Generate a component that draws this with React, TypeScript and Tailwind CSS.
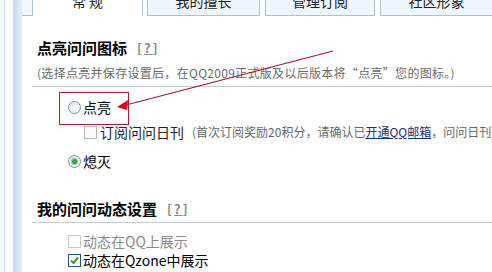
import React from "react";

const font = { fontFamily: '"Noto Sans CJK SC", "Noto Sans", sans-serif' };

function Radio({ checked }: { checked?: boolean }) {
  return (
    <span className="relative inline-flex h-[13px] w-[13px] shrink-0 items-center justify-center rounded-full border border-[#7d8fa4] bg-gradient-to-br from-[#dfe6ee] to-[#fbfcfd]">
      {checked && <span className="h-[5px] w-[5px] rounded-full bg-[#3aa040] ring-1 ring-[#8fd08f]" />}
    </span>
  );
}

function Check({ checked, disabled }: { checked?: boolean; disabled?: boolean }) {
  return (
    <span
      className={
        "inline-flex h-[13px] w-[13px] shrink-0 items-center justify-center border " +
        (checked ? "border-[#1f4f7e] bg-white" : disabled ? "border-[#c7c7c7] bg-white" : "border-[#b8b8b8] bg-[#fafafa]")
      }
    >
      {checked && (
        <svg width="11" height="11" viewBox="0 0 11 11">
          <path d="M2 5.5 L4.5 8 L9 2.5" fill="none" stroke="#2e9e2e" strokeWidth="2" />
        </svg>
      )}
    </span>
  );
}

function Help() {
  return (
    <span className="ml-[10px] text-[13px] font-bold text-[#8a8a8a] tracking-[2px]">
      [<span className="underline">?</span>]
    </span>
  );
}

export default function App() {
  const tabs = [
    { label: "常 规", w: "w-[111px]", ml: "ml-0", active: true },
    { label: "我的擅长", w: "w-[113px]", ml: "ml-[4px]", active: false },
    { label: "管理订阅", w: "w-[110px]", ml: "ml-[5px]", active: false },
    { label: "社区形象", w: "w-[113px]", ml: "ml-[5px]", active: false },
  ];
  return (
    <div className="relative h-[272px] w-[492px] overflow-hidden bg-white text-[#000]" style={font}>
      <div className="flex h-full">
        {/* left decoration */}
        <div className="h-full w-[4px] shrink-0 bg-[#f2f7fd]" />
        <div className="h-full w-[1px] shrink-0 bg-[#d3e1f2]" />
        <div className="h-full w-[8px] shrink-0 bg-white" />
        <div className="h-full w-[9px] shrink-0 bg-gradient-to-r from-[#c6dbf4] to-[#e4eefa]" />
        {/* main */}
        <div className="min-w-0 flex-1">
          {/* tabs */}
          <div className="flex h-[16px]">
            <div className="h-full w-[10px] shrink-0 border-b border-[#a9c1de] bg-[#f3f8fe]" />
            {tabs.map((t) => (
              <div
                key={t.label}
                className={
                  "h-full shrink-0 overflow-hidden border-x border-[#a9c1de] text-center text-[14px] leading-[16px] text-[#222] " +
                  t.w +
                  " " +
                  t.ml +
                  (t.active ? " bg-white" : " border-b bg-[#eef5fd]")
                }
              >
                <div className="-mt-[7px] whitespace-pre">{t.label}</div>
              </div>
            ))}
            <div className="h-full flex-1 border-b border-[#a9c1de]" />
          </div>
          {/* body */}
          <div className="ml-[10px]">
            <div className="border-b border-[#bfcddc] pb-[4px] pl-[5px] pt-[22px]">
              <div className="flex items-center text-[15px] font-bold leading-[20px]">
                <span>点亮问问图标</span>
                <Help />
              </div>
              <div className="mt-[6px] whitespace-nowrap text-[12px] leading-[18px] tracking-[0.3px] text-[#6a6a6a]">
                (选择点亮并保存设置后，在QQ2009正式版及以后版本将“点亮”您的图标。)
              </div>
            </div>
            <div className="pl-[36px] text-[14px]">
              <div className="mt-[10px] flex h-[20px] items-center gap-[2px]">
                <Radio />
                <span className="leading-[20px]">点亮</span>
              </div>
              <div className="mt-[5px] flex h-[20px] items-center whitespace-nowrap pl-[16px]">
                <Check />
                <span className="ml-[3px] leading-[20px] text-[#222]">订阅问问日刊</span>
                <span className="ml-[8px] text-[12px] leading-[20px] text-[#666]">
                  (首次订阅奖励20积分，请确认已
                  <span className="text-[#0f2f86] underline">开通QQ邮箱</span>
                  ，问问日刊每周将发送至您的QQ邮箱)
                </span>
              </div>
              <div className="mt-[9px] flex h-[20px] items-center gap-[2px]">
                <Radio checked />
                <span className="leading-[20px]">熄灭</span>
              </div>
            </div>
            <div className="mt-[28px] border-b border-[#bfcddc] pb-[3px] pl-[5px]">
              <div className="flex items-center text-[15px] font-bold leading-[20px]">
                <span>我的问问动态设置</span>
                <Help />
              </div>
            </div>
            <div className="pl-[36px] text-[14px]">
              <div className="mt-[9px] flex h-[19px] items-center gap-[2px] text-[#8a8a8a]">
                <Check disabled />
                <span className="leading-[19px]">动态在QQ上展示</span>
              </div>
              <div className="flex h-[19px] items-center gap-[2px]">
                <Check checked />
                <span className="leading-[19px]">动态在Qzone中展示</span>
              </div>
            </div>
          </div>
        </div>
      </div>
      {/* annotation overlay */}
      <div className="pointer-events-none absolute left-[59px] top-[92px] h-[33px] w-[70px] border border-[#c4112e]" />
      <svg className="pointer-events-none absolute left-0 top-0" width="492" height="272">
        <line x1="333" y1="51" x2="126" y2="105" stroke="#a8142e" strokeWidth="1.2" />
        <polygon points="117,107 128,100 127,110" fill="#e0001a" />
      </svg>
    </div>
  );
}
